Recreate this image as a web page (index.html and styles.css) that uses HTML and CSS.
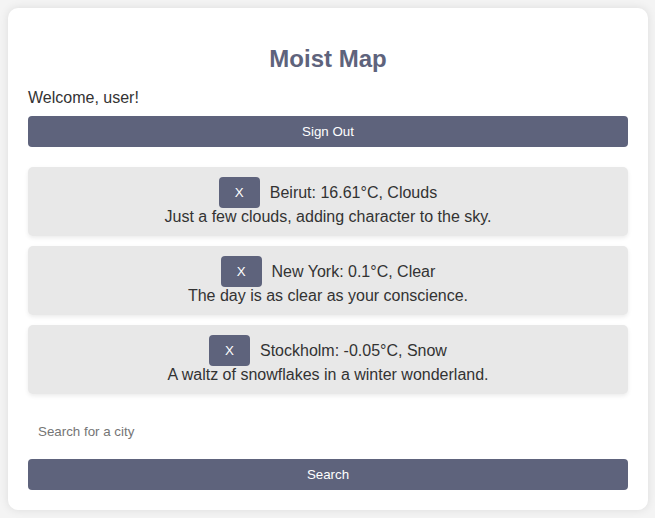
FILE: index.html
```html
<!DOCTYPE html>
<html>
<head>
<meta charset="utf-8">
<link rel="stylesheet" href="styles.css">
</head>
<body>
<div class="app">
  <h2 class="title">Moist Map</h2>
  <p class="welcome">Welcome, user!</p>
  <button class="btn wide">Sign Out</button>
  <div class="list">
    <div class="city">
      <div class="row"><button class="btn x">X</button>Beirut: 16.61°C, Clouds</div>
      <div class="desc">Just a few clouds, adding character to the sky.</div>
    </div>
    <div class="city">
      <div class="row"><button class="btn x">X</button>New York: 0.1°C, Clear</div>
      <div class="desc">The day is as clear as your conscience.</div>
    </div>
    <div class="city">
      <div class="row"><button class="btn x">X</button>Stockholm: -0.05°C, Snow</div>
      <div class="desc">A waltz of snowflakes in a winter wonderland.</div>
    </div>
  </div>
  <input class="search" type="text" placeholder="Search for a city">
  <button class="btn wide">Search</button>
</div>
</body>
</html>
```
FILE: styles.css
```css
html, body {
  margin: 0;
  padding: 0;
}
body {
  background: #f4f4f4;
  font-family: "Liberation Sans", Arial, sans-serif;
  color: #333;
  padding: 8px;
}
.app {
  width: 600px;
  background: #fff;
  border-radius: 10px;
  box-shadow: 0 0 10px rgba(0,0,0,0.1);
  padding: 14px 20px 20px;
  display: flex;
  flex-direction: column;
}
.title {
  margin: 23px 0 16px;
  font-size: 24px;
  line-height: 28px;
  text-align: center;
  color: #5e637c;
}
.welcome {
  margin: 0 0 9px;
  font-size: 16px;
  line-height: 18px;
}
.btn {
  background: #5e637c;
  color: #fff;
  border: none;
  border-radius: 4px;
  font-family: "Liberation Sans", Arial, sans-serif;
  font-size: 13.33px;
  line-height: 15px;
  padding: 8px 16px;
}
.wide {
  width: 100%;
}
.list {
  margin: 20px 0 19px;
  display: flex;
  flex-direction: column;
  gap: 10px;
}
.city {
  background: #e8e8e8;
  border-radius: 5px;
  box-shadow: 0 2px 4px rgba(0,0,0,0.08);
  padding: 10px;
  text-align: center;
  font-size: 16px;
  line-height: 18px;
}
.row {
  display: flex;
  justify-content: center;
  align-items: center;
}
.x {
  margin-right: 10px;
}
.search {
  border: none;
  outline: none;
  padding: 11px 10px 9px;
  font-family: "Liberation Sans", Arial, sans-serif;
  font-size: 13.33px;
  line-height: 16px;
  margin-bottom: 10px;
  background: transparent;
}
.search::placeholder {
  color: #757575;
}
```
